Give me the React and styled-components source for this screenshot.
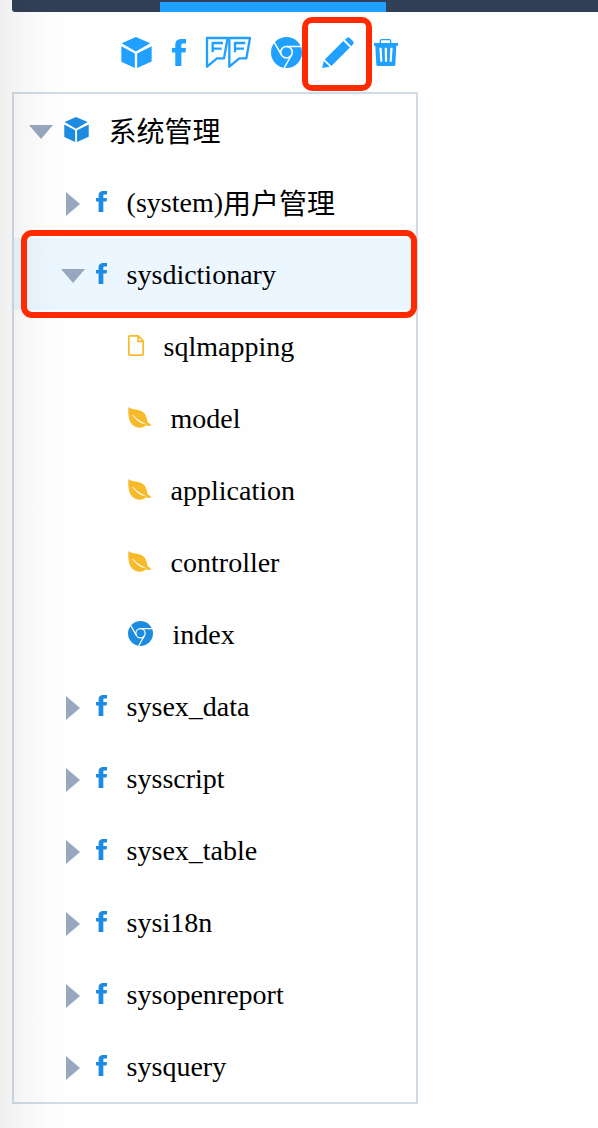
import React from 'react';
import styled, { createGlobalStyle } from 'styled-components';

const GlobalStyle = createGlobalStyle`
  * { box-sizing: border-box; }
  body { margin: 0; background: #fff; }
`;

const Page = styled.main`
  position: relative;
  height: 1128px;
  padding-left: 12px;
  overflow: hidden;
  background: #fefefe;
  color: #000;
  font-family: 'Liberation Serif', 'Noto Sans CJK SC', serif;
`;

const EdgeShade = styled.div`
  position: absolute;
  inset: 0 auto 0 0;
  width: 64px;
  pointer-events: none;
  background: linear-gradient(to right, rgba(0, 0, 0, 0.06), rgba(0, 0, 0, 0.03) 35%, rgba(0, 0, 0, 0.008) 75%, transparent);
`;

const Header = styled.header`
  height: 12px;
  padding: 2px 0 0 148px;
  background: #324057;
  border-bottom-left-radius: 3px;
`;

const ActiveTab = styled.div`
  width: 226px;
  height: 10px;
  background: #20a0ff;
`;

const Toolbar = styled.nav`
  display: flex;
  align-items: center;
  gap: 20px;
  height: 80px;
  padding: 1px 0 0 109px;
  color: #20a0ff;
`;

const Tool = styled.button`
  position: relative;
  display: flex;
  padding: 0;
  border: 0;
  background: none;
  color: inherit;
`;

const Marker = styled.span`
  position: absolute;
  z-index: 1;
  inset: ${(p) => p.$inset};
  border: 6px solid #ff2a00;
  border-radius: ${(p) => p.$radius}px;
  pointer-events: none;
`;

const Tree = styled.ul`
  width: 406px;
  margin: 0;
  padding: 0;
  list-style: none;
  border: 2px solid #d1dbe5;
`;

const Row = styled.li`
  position: relative;
  display: flex;
  align-items: center;
  height: 72px;
  padding-left: ${(p) => 15 + p.$level * 32}px;
  background: ${(p) => (p.$active ? '#ebf6ff' : 'transparent')};
`;

const ArrowSlot = styled.span`
  display: flex;
  justify-content: center;
  width: 24px;
  margin-right: 11px;
  padding-top: 4px;
`;

const Arrow = styled.i`
  border: 12px solid transparent;
  ${(p) =>
    p.$open
      ? 'border-top: 14px solid #97a8be; border-bottom: 0;'
      : 'border-left: 14px solid #97a8be; border-right: 0;'}
`;

const NodeIcon = styled.span`
  display: flex;
  margin: -1px 19.6px 0 0;
  color: ${(p) => (p.$warm ? '#f7ba2a' : '#1d8ce0')};
`;

const Label = styled.span`
  height: 32px;
  padding-top: 1px;
  font-size: 28px;
  line-height: 32px;
  white-space: nowrap;
`;

const Han = styled.span`
  line-height: 0;
  vertical-align: -2px;
`;

const Svg = styled.svg`
  display: block;
  overflow: visible;
  fill: currentColor;
`;

const Cube = ({ size }) => (
  <Svg width={size} height={size} viewBox="0 0 92 94">
    <path d="M44 0 88 19 44 44 1 19ZM0 28 41 50V94L0 75ZM48 50 92 28V74L48 94Z" />
  </Svg>
);

const Facebook = ({ width, height }) => (
  <Svg width={width} height={height} viewBox="160 64 192 384" preserveAspectRatio="none">
    <path d="M288 192v-38.1c0-17.2 3.8-25.9 30.5-25.9H352V64h-55.9c-68.5 0-91.1 31.4-91.1 85.3V192h-45v64h45v192h83V256h56.4l7.6-64h-64z" />
  </Svg>
);

const flag = 'M3 3H65L54 64H33L3 89ZM51 18H20V46M47 35H20';

const Flags = () => (
  <Svg width="45" height="31" viewBox="0 0 135 93">
    <g fill="none" stroke="currentColor" strokeWidth="7" strokeLinejoin="round">
      <path d={flag} />
      <path d={flag} transform="translate(67 0)" />
    </g>
  </Svg>
);

const Chrome = ({ size }) => (
  <Svg width={size} height={size} viewBox="0 0 92 92">
    <circle cx="46" cy="46" r="46" />
    <g fill="none" stroke="#fff" strokeWidth="4.5">
      <circle cx="46" cy="45" r="17" />
      <path d="M46 28H89M31 53 9 15M61 53 39 92" />
    </g>
  </Svg>
);

const Pencil = () => (
  <Svg width="32" height="31" viewBox="0 0 96 94">
    <path d="M69 8 76 2Q79-1 84 3L93 12Q98 17 94 21L88 28ZM64 12 84 32 28 88 8 68ZM5 73 23 90 0 94Z" />
  </Svg>
);

const Trash = () => (
  <Svg width="24" height="27" viewBox="0 0 72 81">
    <path d="M19 13V6Q19 2 23 2H46Q50 2 50 6V13" fill="none" stroke="currentColor" strokeWidth="4" />
    <path fillRule="evenodd" d="M0 12H72V20H67L64 77Q64 81 60 81H12Q8 81 7 77L4 20H0ZM16 26 19 68H25L23 26ZM32 26 33 68H39V26ZM49 26 47 68H53L56 26Z" />
  </Svg>
);

const FileIcon = () => (
  <Svg width="16" height="21" viewBox="0 0 48 63">
    <path d="M2.5 5Q2.5 2.5 5 2.5H31L45.5 18V58Q45.5 60.5 43 60.5H5Q2.5 60.5 2.5 58ZM30 3V19H45" fill="none" stroke="currentColor" strokeWidth="5" />
  </Svg>
);

const Leaf = () => (
  <Svg width="23" height="21" viewBox="0 0 69 63">
    <path d="M1 0C10 9 25 6 38 11C53 17 57 32 59 45Q63 51 69 51L67 57Q59 58 54 55C47 62 34 65 22 59C4 50 0 32 1 0Z" />
    <path d="M14 23C24 36 36 43 52 51C36 47 23 39 14 23Z" fill="#fff" stroke="#fff" strokeWidth="1.5" />
  </Svg>
);

const nodeIcons = {
  cube: <Cube size={25} />,
  facebook: <Facebook width={11} height={21} />,
  file: <FileIcon />,
  leaf: <Leaf />,
  chrome: <Chrome size={25} />,
};

const nodes = [
  { han: '系统管理', level: 0, icon: 'cube', open: true },
  { label: '(system)', han: '用户管理', level: 1, icon: 'facebook' },
  { label: 'sysdictionary', level: 1, icon: 'facebook', open: true, active: true },
  { label: 'sqlmapping', level: 2, icon: 'file' },
  { label: 'model', level: 2, icon: 'leaf' },
  { label: 'application', level: 2, icon: 'leaf' },
  { label: 'controller', level: 2, icon: 'leaf' },
  { label: 'index', level: 2, icon: 'chrome' },
  { label: 'sysex_data', level: 1, icon: 'facebook' },
  { label: 'sysscript', level: 1, icon: 'facebook' },
  { label: 'sysex_table', level: 1, icon: 'facebook' },
  { label: 'sysi18n', level: 1, icon: 'facebook' },
  { label: 'sysopenreport', level: 1, icon: 'facebook' },
  { label: 'sysquery', level: 1, icon: 'facebook' },
];

export default function App() {
  return (
    <Page>
      <GlobalStyle />
      <Header>
        <ActiveTab />
      </Header>
      <Toolbar>
        <Tool><Cube size={31} /></Tool>
        <Tool><Facebook width={14} height={27} /></Tool>
        <Tool><Flags /></Tool>
        <Tool><Chrome size={31} /></Tool>
        <Tool>
          <Pencil />
          <Marker $inset="-20px -17.5px -23px -20.5px" $radius={10} />
        </Tool>
        <Tool><Trash /></Tool>
      </Toolbar>
      <Tree>
        {nodes.map((node) => (
          <Row key={node.label || node.han} $level={node.level} $active={node.active}>
            <ArrowSlot>{node.level < 2 && <Arrow $open={node.open} />}</ArrowSlot>
            <NodeIcon $warm={node.icon === 'file' || node.icon === 'leaf'}>{nodeIcons[node.icon]}</NodeIcon>
            <Label>
              {node.label}
              {node.han && <Han>{node.han}</Han>}
            </Label>
            {node.active && <Marker $inset="-8px -1px -8px 7px" $radius={11} />}
          </Row>
        ))}
      </Tree>
      <EdgeShade />
    </Page>
  );
}
